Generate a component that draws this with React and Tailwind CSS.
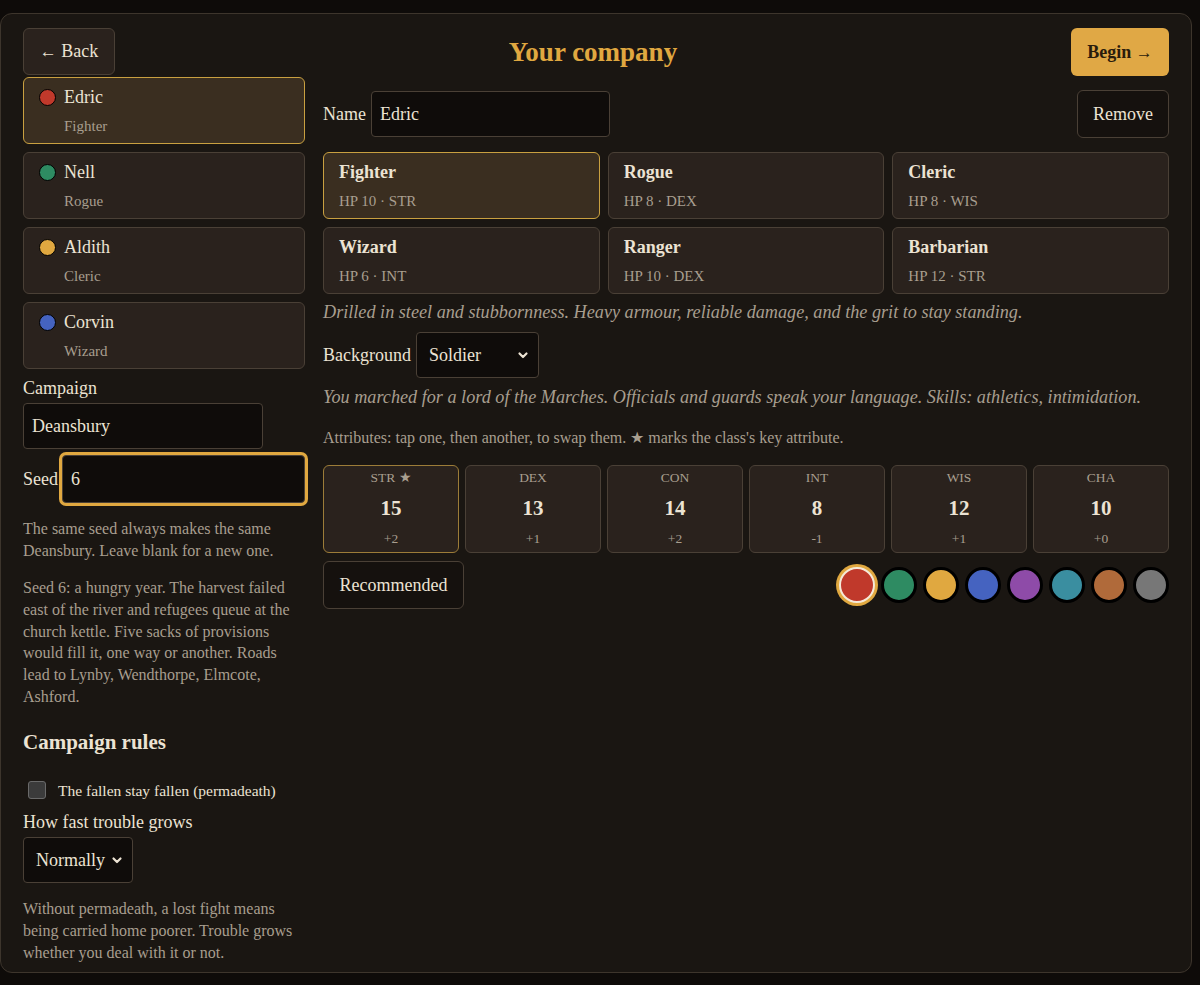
import React from "react";

const members = [
  { name: "Edric", cls: "Fighter", dot: "bg-[#c0392b]", active: true },
  { name: "Nell", cls: "Rogue", dot: "bg-[#2e8b62]" },
  { name: "Aldith", cls: "Cleric", dot: "bg-[#e0a840]" },
  { name: "Corvin", cls: "Wizard", dot: "bg-[#4563c0]" },
];

const classes = [
  { name: "Fighter", sub: "HP 10 · STR", active: true },
  { name: "Rogue", sub: "HP 8 · DEX" },
  { name: "Cleric", sub: "HP 8 · WIS" },
  { name: "Wizard", sub: "HP 6 · INT" },
  { name: "Ranger", sub: "HP 10 · DEX" },
  { name: "Barbarian", sub: "HP 12 · STR" },
];

const stats = [
  { label: "STR ★", value: 15, mod: "+2", key: true },
  { label: "DEX", value: 13, mod: "+1" },
  { label: "CON", value: 14, mod: "+2" },
  { label: "INT", value: 8, mod: "-1" },
  { label: "WIS", value: 12, mod: "+1" },
  { label: "CHA", value: 10, mod: "+0" },
];

const swatches = [
  "bg-[#c0392b]",
  "bg-[#2e8b62]",
  "bg-[#e0a840]",
  "bg-[#4563c0]",
  "bg-[#8e4ba8]",
  "bg-[#3a8ea0]",
  "bg-[#b06a3a]",
  "bg-[#777777]",
];

function Chevron() {
  return (
    <svg width="12" height="12" viewBox="0 0 12 12" className="shrink-0">
      <path d="M2.5 4.5 L6 8 L9.5 4.5" fill="none" stroke="#ece3d3" strokeWidth="2.2" strokeLinecap="round" strokeLinejoin="round" />
    </svg>
  );
}

export default function App() {
  return (
    <div
      className="min-h-[985px] bg-[#0e0b09] pt-[13px] text-[#ece3d3]"
      style={{ fontFamily: '"Liberation Serif", "DejaVu Serif", serif' }}
    >
      <div className="w-[1192px] h-[960px] rounded-[12px] border border-[#3d352c] bg-[#1a1612] px-[22px] pt-[14px]">
        {/* header */}
        <div className="flex h-[48px] items-start justify-between">
          <button className="h-[47px] w-[92px] rounded-[6px] border border-[#4a4036] bg-[#2a221d] text-[18px]">
            <span className="text-[17px]">←</span> Back
          </button>
          <h1 className="pt-[4px] text-[27px] font-bold text-[#e0a840]">Your company</h1>
          <button className="h-[48px] w-[98px] rounded-[6px] bg-[#e0a845] text-[18px] font-bold text-[#2a1c0c]">
            Begin <span className="text-[17px] font-normal">→</span>
          </button>
        </div>

        <div className="mt-[1px] flex gap-[18px]">
          {/* left column */}
          <div className="w-[282px] shrink-0">
            <div className="flex flex-col gap-[8px]">
              {members.map((m) => (
                <div
                  key={m.name}
                  className={
                    "h-[67px] rounded-[6px] border px-[15px] pt-[7px] " +
                    (m.active ? "border-[#c9a040] bg-[#3a2e20]" : "border-[#4a4036] bg-[#2a221d]")
                  }
                >
                  <div className="flex h-[24px] items-center gap-[8px] text-[18px]">
                    <span className={"h-[17px] w-[17px] rounded-full border-[1.5px] border-black " + m.dot} />
                    {m.name}
                  </div>
                  <div className="mt-[7px] pl-[25px] text-[15px] leading-[20px] text-[#a89e8f]">{m.cls}</div>
                </div>
              ))}
            </div>

            <div className="mt-[7px] h-[24px] text-[18px] leading-[24px]">Campaign</div>
            <div className="mt-[3px] flex h-[46px] w-[240px] items-center rounded-[4px] border border-[#4a4036] bg-[#0f0c0a] px-[8px] text-[18px]">
              Deansbury
            </div>

            <div className="mt-[6px] flex items-center gap-[4px]">
              <span className="text-[18px]">Seed</span>
              <div className="flex h-[48px] flex-1 items-center rounded-[4px] border border-[#4a4036] bg-[#0f0c0a] px-[8px] text-[18px] shadow-[0_0_0_3px_#e0a840]">
                6
              </div>
            </div>

            <p className="mt-[15px] text-[16px] leading-[22px] text-[#a89e8f]">
              The same seed always makes the same Deansbury. Leave blank for a new one.
            </p>
            <p className="mt-[15px] text-[16px] leading-[21.8px] text-[#a89e8f]">
              Seed 6: a hungry year. The harvest failed east of the river and refugees queue at the church kettle. Five
              sacks of provisions would fill it, one way or another. Roads lead to Lynby, Wendthorpe, Elmcote, Ashford.
            </p>

            <h2 className="mt-[20px] text-[21px] font-bold leading-[28px]">Campaign rules</h2>
            <div className="mt-[23px] flex items-center gap-[12px] pl-[5px]">
              <span className="h-[18px] w-[18px] rounded-[3px] border border-[#6a6a6a] bg-[#3b3b3b]" />
              <span className="text-[15.5px]">The fallen stay fallen (permadeath)</span>
            </div>
            <div className="mt-[8px] h-[24px] text-[18px] leading-[24px]">How fast trouble grows</div>
            <div className="mt-[3px] flex h-[46px] w-[110px] items-center justify-between rounded-[4px] border border-[#4a4036] bg-[#0f0c0a] pl-[12px] pr-[9px] text-[18px]">
              Normally <Chevron />
            </div>
            <p className="mt-[15px] text-[16px] leading-[22px] text-[#a89e8f]">
              Without permadeath, a lost fight means being carried home poorer. Trouble grows whether you deal with it or
              not.
            </p>
          </div>

          {/* right column */}
          <div className="flex-1 pt-[13px]">
            <div className="flex items-center justify-between">
              <div className="flex items-center gap-[5px]">
                <span className="text-[18px]">Name</span>
                <div className="flex h-[46px] w-[239px] items-center rounded-[4px] border border-[#4a4036] bg-[#0f0c0a] px-[8px] text-[18px]">
                  Edric
                </div>
              </div>
              <button className="h-[48px] w-[92px] rounded-[6px] border border-[#4a4036] bg-[#15110e] text-[18px]">
                Remove
              </button>
            </div>

            <div className="mt-[14px] grid grid-cols-3 gap-x-[8px] gap-y-[8px]">
              {classes.map((c) => (
                <div
                  key={c.name}
                  className={
                    "h-[67px] rounded-[6px] border px-[15px] pt-[7px] " +
                    (c.active ? "border-[#c9a040] bg-[#3a2e20]" : "border-[#4a4036] bg-[#2a221d]")
                  }
                >
                  <div className="h-[24px] text-[18px] font-bold leading-[24px]">{c.name}</div>
                  <div className="mt-[7px] text-[15px] leading-[20px] text-[#a89e8f]">{c.sub}</div>
                </div>
              ))}
            </div>

            <p className="mt-[6px] text-[18.2px] italic leading-[24px] text-[#a89e8f]">
              Drilled in steel and stubbornness. Heavy armour, reliable damage, and the grit to stay standing.
            </p>

            <div className="mt-[8px] flex items-center gap-[5px]">
              <span className="text-[18px]">Background</span>
              <div className="flex h-[46px] w-[123px] items-center justify-between rounded-[4px] border border-[#4a4036] bg-[#0f0c0a] pl-[12px] pr-[9px] text-[18px]">
                Soldier <Chevron />
              </div>
            </div>

            <p className="mt-[7px] text-[18.2px] italic leading-[24px] text-[#a89e8f]">
              You marched for a lord of the Marches. Officials and guards speak your language. Skills: athletics,
              intimidation.
            </p>

            <p className="mt-[18px] text-[16px] leading-[22px] text-[#a89e8f]">
              Attributes: tap one, then another, to swap them. ★ marks the class's key attribute.
            </p>

            <div className="mt-[16px] grid grid-cols-6 gap-[6px]">
              {stats.map((s) => (
                <div
                  key={s.label}
                  className={
                    "flex h-[88px] flex-col items-center rounded-[6px] border bg-[#2a221d] pt-[3px] " +
                    (s.key ? "border-[#9c7c38]" : "border-[#4a4036]")
                  }
                >
                  <div className="h-[18px] text-[13.5px] leading-[18px] text-[#a89e8f]">{s.label}</div>
                  <div className="mt-[8px] h-[26px] text-[21px] font-bold leading-[26px]">{s.value}</div>
                  <div className="mt-[9px] h-[18px] text-[13.5px] leading-[18px] text-[#a89e8f]">{s.mod}</div>
                </div>
              ))}
            </div>

            <div className="mt-[8px] flex items-center justify-between">
              <button className="h-[48px] w-[141px] rounded-[6px] border border-[#4a4036] bg-[#15110e] text-[18px]">
                Recommended
              </button>
              <div className="flex items-center gap-[6px]">
                {swatches.map((s, i) => (
                  <span
                    key={s}
                    className={
                      "h-[36px] w-[36px] rounded-full " +
                      s +
                      (i === 0
                        ? " border-2 border-[#f5e9d8] shadow-[0_0_0_3px_#e0a840]"
                        : " border-[3px] border-black")
                    }
                  />
                ))}
              </div>
            </div>
          </div>
        </div>
      </div>
    </div>
  );
}
